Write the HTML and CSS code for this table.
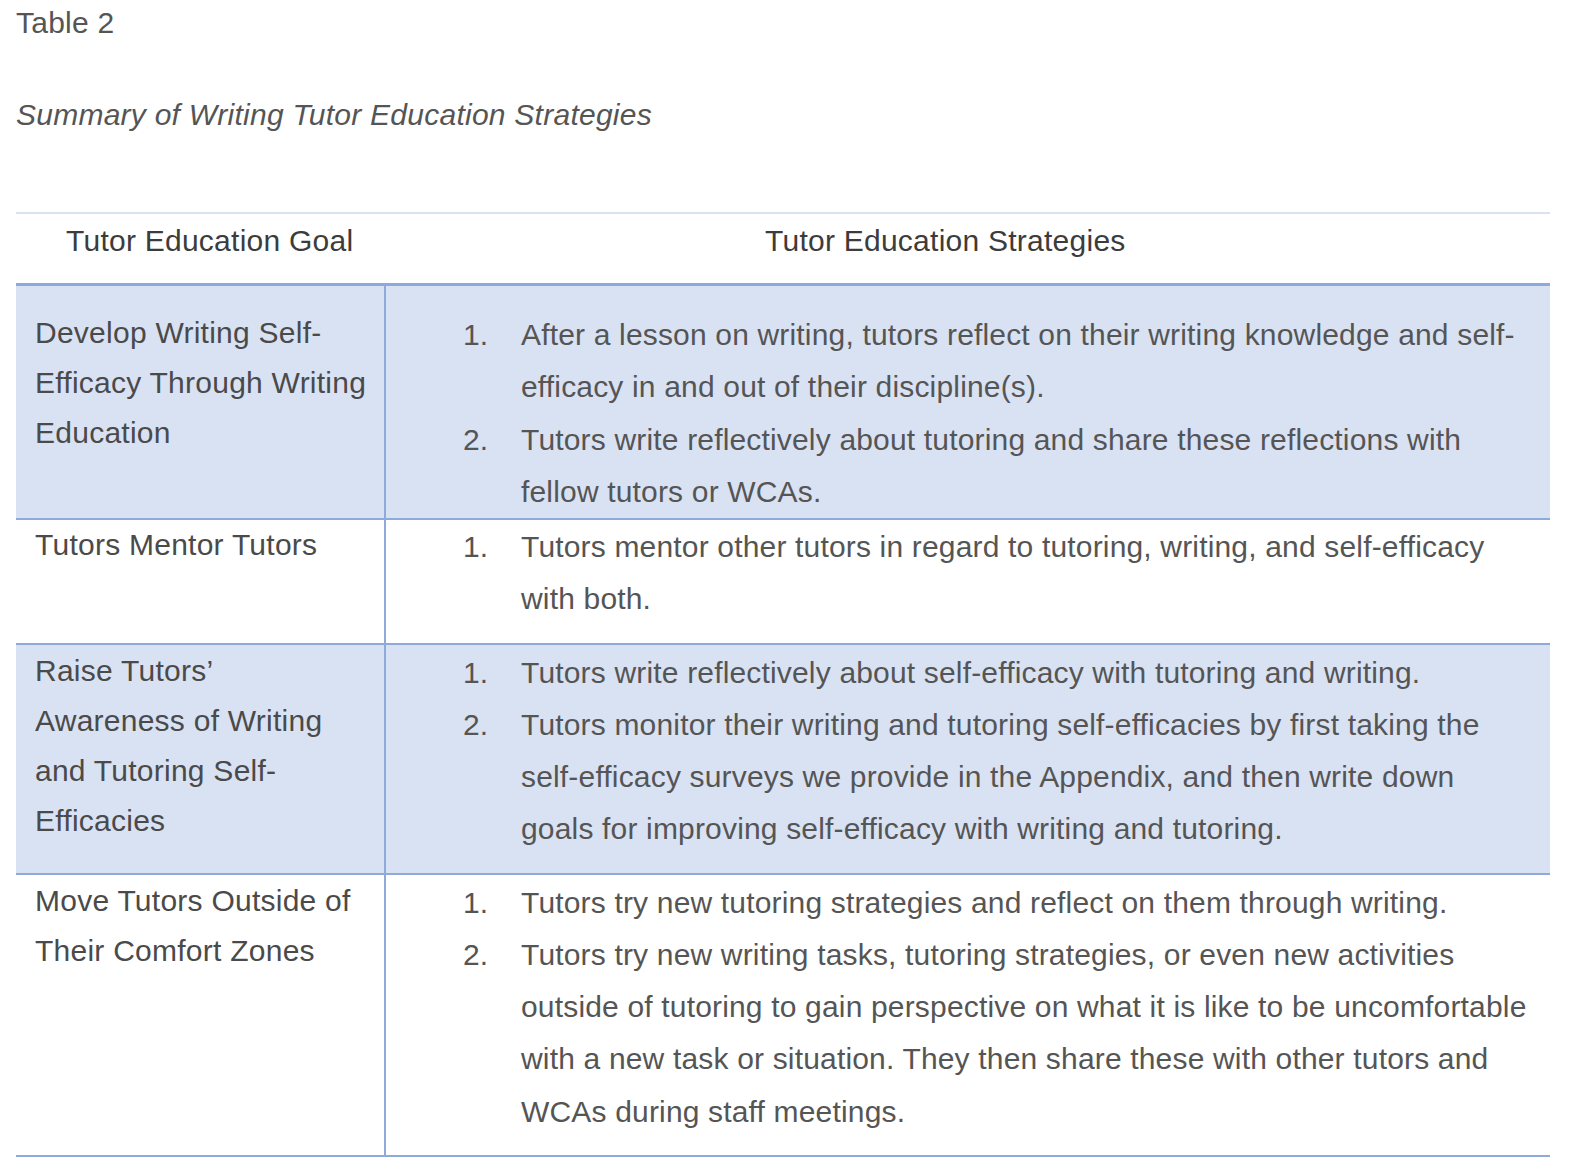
FILE: index.html
```html
<!DOCTYPE html>
<html lang="en">
<head>
<meta charset="utf-8">
<title>Table 2</title>
<link rel="stylesheet" href="styles.css">
</head>
<body>
<p class="label">Table 2</p>
<p class="title">Summary of Writing Tutor Education Strategies</p>
<div class="grid-table">
  <div class="head">
    <div class="head-goal">Tutor Education Goal</div>
    <div class="head-strat">Tutor Education Strategies</div>
  </div>
  <div class="row shaded first">
    <div class="goal">Develop Writing Self-Efficacy Through Writing Education</div>
    <div class="strat">
      <ol class="list">
        <li><span class="num">1.</span><span class="txt">After a lesson on writing, tutors reflect on their writing knowledge and self-efficacy in and out of their discipline(s).</span></li>
        <li><span class="num">2.</span><span class="txt">Tutors write reflectively about tutoring and share these reflections with fellow tutors or WCAs.</span></li>
      </ol>
    </div>
  </div>
  <div class="row second">
    <div class="goal">Tutors Mentor Tutors</div>
    <div class="strat">
      <ol class="list">
        <li><span class="num">1.</span><span class="txt">Tutors mentor other tutors in regard to tutoring, writing, and self-efficacy with both.</span></li>
      </ol>
    </div>
  </div>
  <div class="row shaded">
    <div class="goal">Raise Tutors’ Awareness of Writing and Tutoring Self-Efficacies</div>
    <div class="strat">
      <ol class="list">
        <li><span class="num">1.</span><span class="txt">Tutors write reflectively about self-efficacy with tutoring and writing.</span></li>
        <li><span class="num">2.</span><span class="txt">Tutors monitor their writing and tutoring self-efficacies by first taking the self-efficacy surveys we provide in the Appendix, and then write down goals for improving self-efficacy with writing and tutoring.</span></li>
      </ol>
    </div>
  </div>
  <div class="row">
    <div class="goal">Move Tutors Outside of Their Comfort Zones</div>
    <div class="strat">
      <ol class="list">
        <li><span class="num">1.</span><span class="txt">Tutors try new tutoring strategies and reflect on them through writing.</span></li>
        <li><span class="num">2.</span><span class="txt">Tutors try new writing tasks, tutoring strategies, or even new activities outside of tutoring to gain perspective on what it is like to be uncomfortable with a new task or situation. They then share these with other tutors and WCAs during staff meetings.</span></li>
      </ol>
    </div>
  </div>
</div>
</body>
</html>
```
FILE: styles.css
```css
html, body {
  margin: 0;
  background: #ffffff;
}
body {
  padding: 5px 0 0 16px;
  font-family: "Liberation Sans", Arial, Helvetica, sans-serif;
  font-size: 30px;
  color: #555555;
  letter-spacing: 0.25px;
}
.label {
  margin: 0;
  line-height: 36px;
}
.title {
  margin: 56px 0 0 0;
  line-height: 36px;
  font-style: italic;
}
.grid-table {
  width: 1534px;
  margin-top: 79px;
  border-top: 2px solid #d9e2f3;
}
.head {
  display: grid;
  grid-template-columns: 370px 1fr;
  padding: 9px 0 24px 0;
  line-height: 36px;
  color: #3c3c3c;
  border-bottom: 3px solid #8eaadb;
}
.head-goal {
  padding-left: 50px;
}
.head-strat {
  padding-left: 379px;
}
.row {
  display: grid;
  grid-template-columns: 370px 1fr;
  border-bottom: 2px solid #8eaadb;
}
.row.shaded {
  background: #d9e2f3;
}
.goal {
  border-right: 2px solid #8eaadb;
  padding: 1px 17px 17px 19px;
  line-height: 50px;
  color: #4a4a4a;
}
.strat {
  padding: 2px 21px 17px 77px;
  letter-spacing: 0.17px;
}
.row.first .goal {
  padding-top: 22px;
  padding-bottom: 0;
}
.row.first .strat {
  padding-top: 23px;
  padding-bottom: 0;
}
.row.second .goal {
  padding-top: 0;
}
.row.second .strat {
  padding-top: 1px;
}
.list {
  list-style: none;
  margin: 0;
  padding: 0;
}
.list li {
  display: grid;
  grid-template-columns: 58px 1fr;
  line-height: 52.25px;
}
```
